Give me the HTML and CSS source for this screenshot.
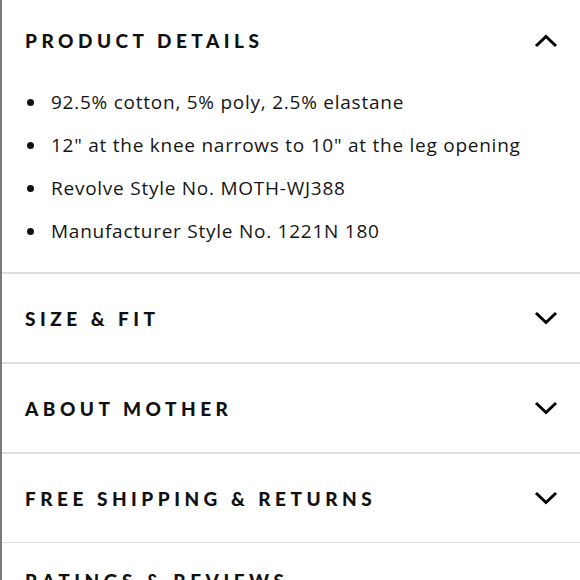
FILE: index.html
```html
<!doctype html>
<html lang="en">
 <head>
  <meta charset="UTF-8">
  <link rel="stylesheet" href="styles.css">
  <title>Product details</title>
 </head>
 <body>
  <div class="acc">
   <section class="acc-item open">
    <div class="acc-head first">
     <h3>Product Details</h3>
     <svg class="chev" width="24" height="14" viewBox="0 0 24 14"><polyline points="2,12 12,2.5 22,12" /></svg>
    </div>
    <ul class="details">
     <li>92.5% cotton, 5% poly, 2.5% elastane</li>
     <li>12" at the knee narrows to 10" at the leg opening</li>
     <li>Revolve Style No. MOTH-WJ388</li>
     <li>Manufacturer Style No. 1221N 180</li>
    </ul>
   </section>
   <section class="acc-item">
    <div class="acc-head">
     <h3>Size &amp; Fit</h3>
     <svg class="chev" width="24" height="14" viewBox="0 0 24 14"><polyline points="2,2 12,11.5 22,2" /></svg>
    </div>
   </section>
   <section class="acc-item">
    <div class="acc-head">
     <h3>About Mother</h3>
     <svg class="chev" width="24" height="14" viewBox="0 0 24 14"><polyline points="2,2 12,11.5 22,2" /></svg>
    </div>
   </section>
   <section class="acc-item">
    <div class="acc-head">
     <h3>Free Shipping &amp; Returns</h3>
     <svg class="chev" width="24" height="14" viewBox="0 0 24 14"><polyline points="2,2 12,11.5 22,2" /></svg>
    </div>
   </section>
   <section class="acc-item last">
    <div class="acc-head">
     <h3>Ratings &amp; Reviews</h3>
    </div>
   </section>
  </div>
 </body>
</html>
```
FILE: styles.css
```css
body{margin:0;padding:0;background:#fff;color:#111;overflow:hidden;}
.acc{
    border-left:2px solid #7a7a7a;
    height:580px;
    overflow:hidden;
    font-family:"Lato","Liberation Sans",sans-serif;
}
.acc-item{border-bottom:2px solid #dedede;}
.acc-item:nth-child(4){border-bottom-width:1px;}
.acc-item.last{border-bottom:0;}
.acc-head{
    height:88px;
    display:flex;
    align-items:center;
    justify-content:space-between;
    padding:0 22px 0 23px;
}
.acc-head.first{height:81px;}
.acc-item.last .acc-head{height:74px;}
.acc-head h3{
    margin:0;
    font-size:19px;
    font-weight:900;
    letter-spacing:4.5px;
    text-transform:uppercase;
}
.chev{display:block;}
.chev polyline{fill:none;stroke:#000;stroke-width:3;}
.details{
    list-style:none;
    margin:0;
    padding:0 0 19px 49px;
    font-family:"Open Sans","Liberation Sans",sans-serif;
    font-size:19px;
    letter-spacing:0.75px;
    line-height:43px;
    color:#151515;
}
.details li{position:relative;}
.details li::before{
    content:"";
    position:absolute;
    left:-24px; top:18px;
    width:7px; height:7px;
    border-radius:50%;
    background:#111;
}
```
